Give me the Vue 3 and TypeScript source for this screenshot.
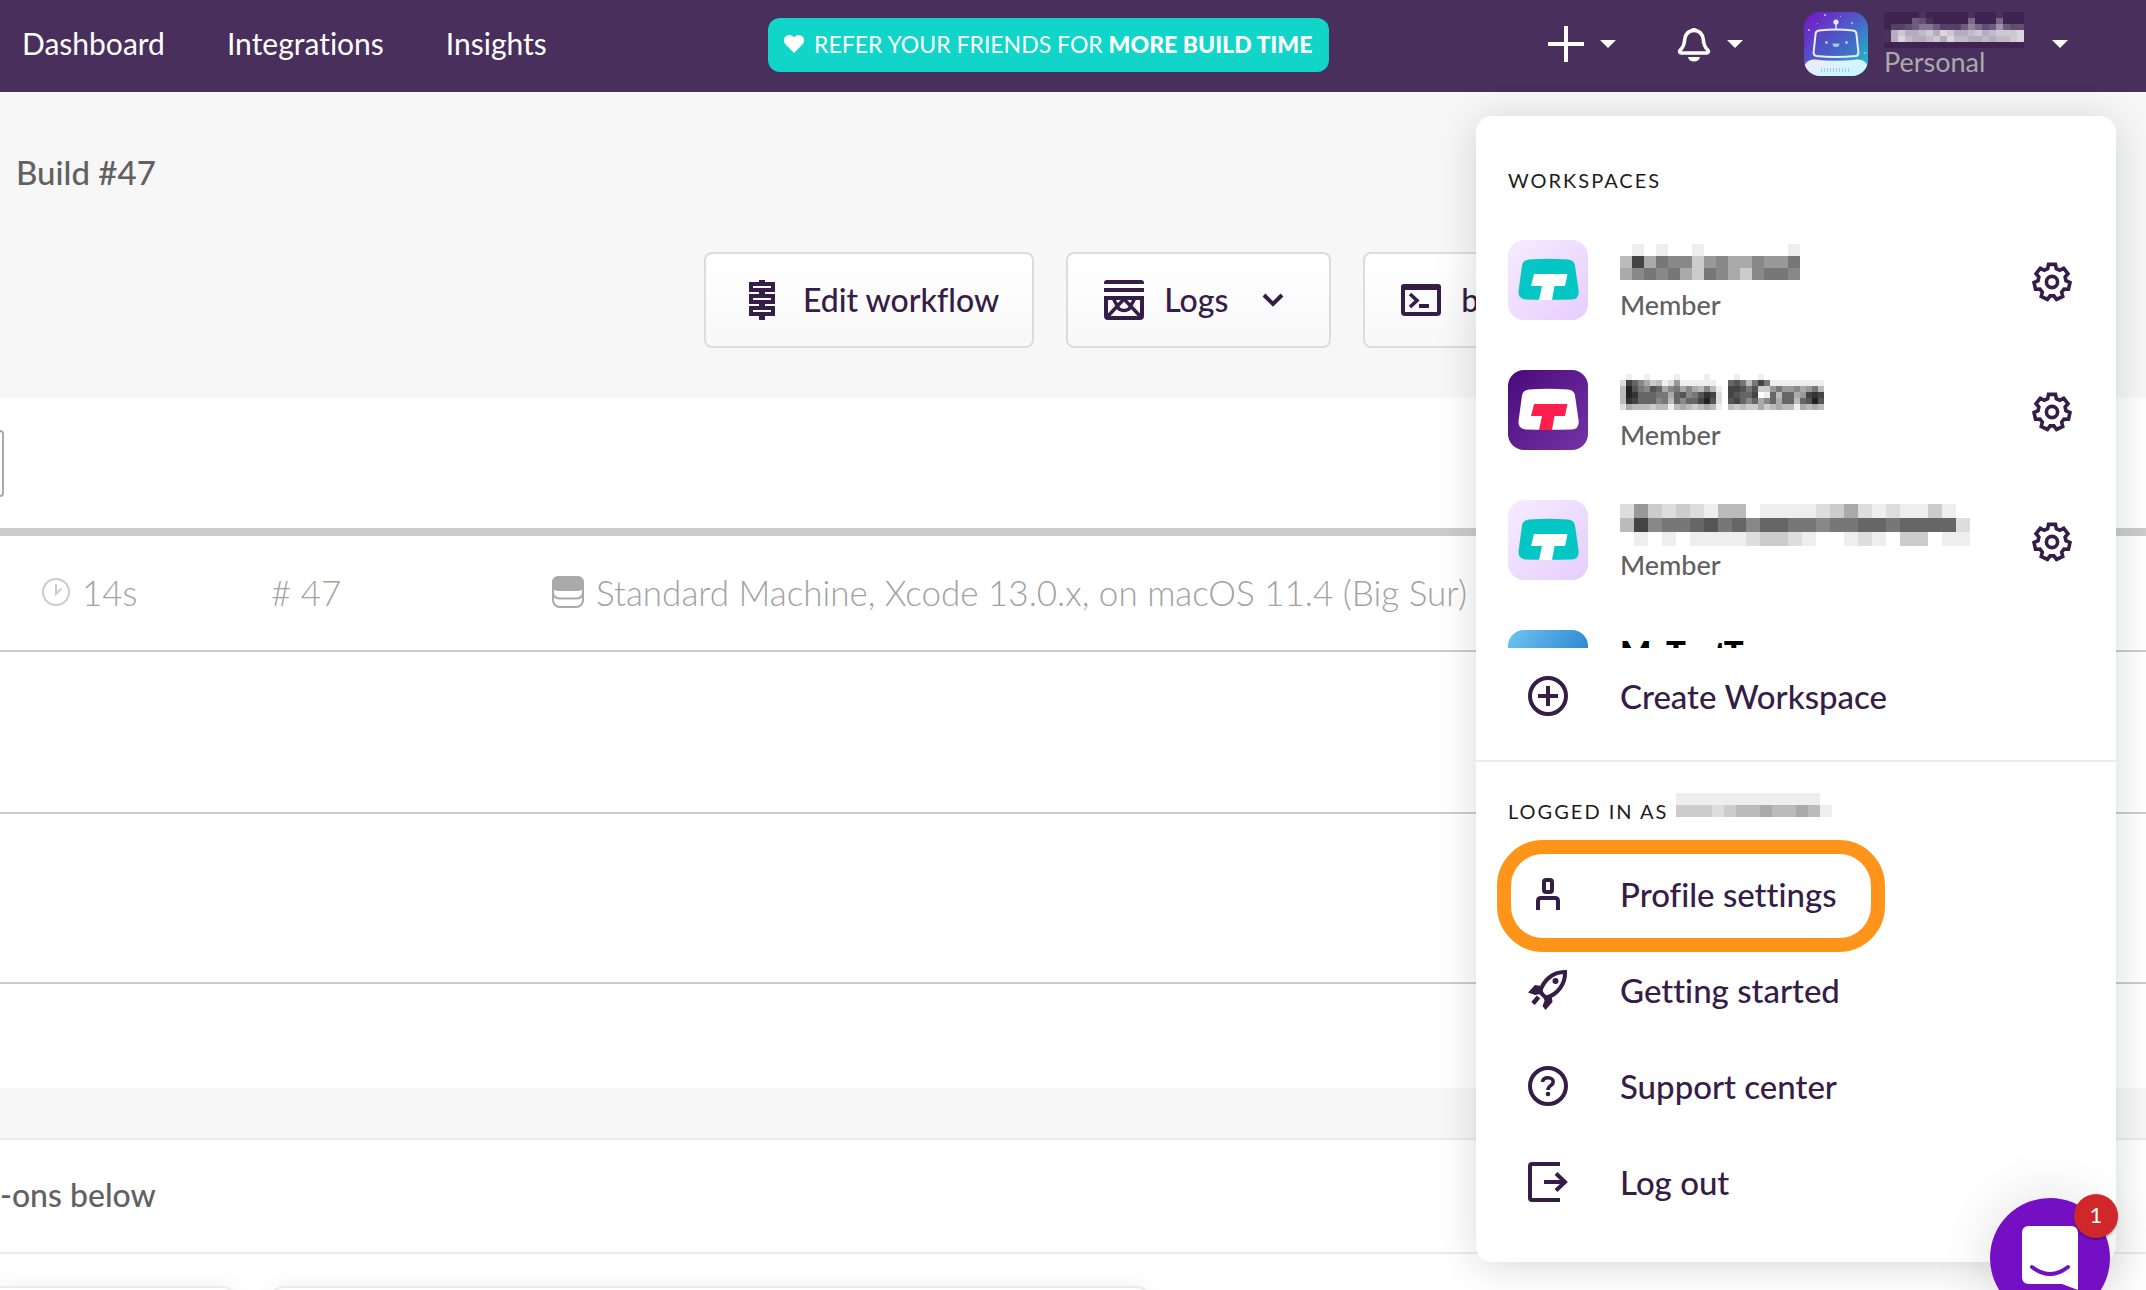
<script setup lang="ts">
interface Mosaic {
  cellW: number
  cellH: number
  rows: string[]
}

interface Workspace {
  label: string
  tone: string
  mosaic: Mosaic
}

interface Cell {
  x: number
  y: number
  shade: string
}

const navLinks: string[] = ['Dashboard', 'Integrations', 'Insights']

// Each character is one block of a redacted name: a grey level in hex, f is paper white.
const workspaces: Workspace[] = [
  {
    label: 'Workspace 1',
    tone: 'light',
    mosaic: {
      cellW: 12,
      cellH: 12,
      rows: ['fefeffefffffffe', 'b4a788c98aa8997', 'a8787ac78ac8778'],
    },
  },
  {
    label: 'Workspace 2',
    tone: 'dark',
    mosaic: {
      cellW: 6,
      cellH: 6,
      rows: [
        'feffeffffeffffeffffefffeffffffffff',
        'd468acbed9eeeeeeff657b747eeeeeeeee',
        'b257856a87a8ab8bef44575cc97998a97b',
        'b2366677a6587534df45664fe6b66a9434',
        'b3466687b6866425df54686a86a66b6525',
        'dabbbcbbebabcbabefbcbccacbabbeabab',
      ],
    },
  },
  {
    label: 'Workspace 3',
    tone: 'light',
    mosaic: {
      cellW: 14,
      cellH: 14,
      rows: ['d9cdcdebbfeeeedcadedeecef', 'b48776576866778776676666d', 'fefefeeeedccdeffedefccfee'],
    },
  },
]

const accountMosaic: Mosaic = {
  cellW: 12,
  cellH: 12,
  rows: ['eeeeeeeeeeeef', 'cccdcbbabbabe', 'fffffffffffff'],
}

// Levels here are light on the dark bar: 0 is the bar's darkest block.
const userMosaic: Mosaic = {
  cellW: 7,
  cellH: 6,
  rows: [
    '00000100000010001000',
    '00004310000050005000',
    '02234664222475348433',
    '1acaabcadcaabcabcccd',
    '1adbaabcadbbaababbcd',
    '00000000000000000000',
  ],
}

function cells(mosaic: Mosaic): Cell[] {
  return mosaic.rows.flatMap((row, r) =>
    [...row].map((shade, c) => ({ x: c * mosaic.cellW, y: r * mosaic.cellH, shade })),
  )
}

function mosaicWidth(mosaic: Mosaic): number {
  return mosaic.rows[0].length * mosaic.cellW
}

function mosaicHeight(mosaic: Mosaic): number {
  return mosaic.rows.length * mosaic.cellH
}

// Seven-toothed gear centred in a 40 x 40 box.
function gearPath(): string {
  const teeth = 7
  const points: string[] = []
  for (let k = 0; k < teeth; k += 1) {
    const middle = -90 + (k * 360) / teeth
    const corners: [number, number][] = [
      [-18, 14],
      [-11, 18],
      [11, 18],
      [18, 14],
    ]
    for (const [turn, radius] of corners) {
      const a = ((middle + turn) * Math.PI) / 180
      points.push(`${(20 + radius * Math.cos(a)).toFixed(2)} ${(20 + radius * Math.sin(a)).toFixed(2)}`)
    }
  }
  return `M${points.join('L')}Z`
}

const gear = gearPath()
</script>

<template>
  <div class="page">
    <header class="topbar">
      <nav class="nav">
        <a v-for="link in navLinks" :key="link" href="#">{{ link }}</a>
      </nav>
      <a class="refer" href="#">
        <svg width="20" height="18" viewBox="0 0 20 18"><path d="M10 18 1.600 9.400A5.400 5.400 0 0 1 1.500 1.600 5.400 5.400 0 0 1 9.100 1.600L10 2.600l.9-1A5.400 5.400 0 0 1 18.500 1.600a5.400 5.400 0 0 1-.1 7.800z" fill="#fff" /></svg>
        <span>REFER YOUR FRIENDS FOR <b>MORE BUILD TIME</b></span>
      </a>
      <div class="tools">
        <button class="tool" type="button" aria-label="Add">
          <svg width="36" height="36" viewBox="0 0 36 36"><path d="M18 0v36M0 18h36" stroke="#fff" stroke-width="4" /></svg>
          <svg class="caret" width="16" height="8" viewBox="0 0 16 8"><path d="M0 0h16L8 8z" fill="#fff" /></svg>
        </button>
        <button class="tool" type="button" aria-label="Notifications">
          <svg width="34" height="36" viewBox="0 0 34 36">
            <path d="M17 4.500c-5.500 0-9 4-9.300 9-.3 5-1.200 7.300-4.200 10.300-1.500 1.700-.8 3.200 1 3.200h25c1.800 0 2.500-1.500 1-3.200-3-3-3.900-5.300-4.200-10.300-.3-5-3.800-9-9.300-9z" fill="none" stroke="#fff" stroke-width="3.600" />
            <path d="M13 6a4 4 0 1 1 8 0zM11 31h12c-.6 3-3 4.600-6 4.600S11.600 34 11 31z" fill="#fff" />
          </svg>
          <svg class="caret" width="16" height="8" viewBox="0 0 16 8"><path d="M0 0h16L8 8z" fill="#fff" /></svg>
        </button>
        <button class="account" type="button" aria-label="Account menu">
          <svg class="avatar" width="64" height="64" viewBox="0 0 64 64">
            <defs>
              <linearGradient id="sky" x1="0" y1="0" x2="1" y2="1">
                <stop offset="0" stop-color="#7a10c8" />
                <stop offset="0.5" stop-color="#4a63c8" />
                <stop offset="1" stop-color="#12d0c8" />
              </linearGradient>
              <linearGradient id="body" x1="0" y1="0" x2="1" y2="1">
                <stop offset="0" stop-color="#f3e9ff" />
                <stop offset="1" stop-color="#bdfcff" />
              </linearGradient>
            </defs>
            <rect width="64" height="64" fill="url(#sky)" />
            <path d="M32 18v-6" stroke="#dfe0ff" stroke-width="1.500" />
            <circle cx="32" cy="10" r="2.600" fill="#eee8ff" />
            <path d="M15 18.500Q32 16.500 49 18.500q3 .3 3.400 3l2 19q.2 3.200-3 3.600Q32 46 12.600 44.100q-3-.4-3-3.600l2-19q.4-2.700 3.400-3z" fill="#4a50c0" fill-opacity="0.350" stroke="#efeaff" stroke-width="2" />
            <circle cx="22.500" cy="30.500" r="1.300" fill="#cfd6ff" />
            <circle cx="42.500" cy="30.500" r="1.300" fill="#cfd6ff" />
            <path d="M28.500 31.500h7a3.500 3.500 0 0 1-7 0z" fill="#a9c8f4" />
            <path d="M0 64V54q3-7 11-6.500Q32 50 53 47.500 61 47 64 54v10z" fill="url(#body)" />
            <path d="M17 58h30" stroke="#a8c4f0" stroke-width="4" stroke-dasharray="1 2" />
            <path d="M20 2h2v2h-2zM36 4h1v1h-1zM47 10h2v2h-2zM13 11h1v1h-1zM4 17h2v2H4zM60 40h2v2h-2z" fill="#b79cf0" />
          </svg>
          <span class="who">
            <svg :width="mosaicWidth(userMosaic)" :height="mosaicHeight(userMosaic)" shape-rendering="crispEdges">
              <rect :width="mosaicWidth(userMosaic)" :height="mosaicHeight(userMosaic)" fill="#3f2452" />
              <rect v-for="(c, i) in cells(userMosaic)" :key="i" :x="c.x" :y="c.y" :width="userMosaic.cellW" :height="userMosaic.cellH" fill="#fff" :fill-opacity="parseInt(c.shade, 16) / 16" />
            </svg>
            <span>Personal</span>
          </span>
          <svg class="caret" width="16" height="8" viewBox="0 0 16 8"><path d="M0 0h16L8 8z" fill="#fff" /></svg>
        </button>
      </div>
    </header>

    <main>
      <div class="crumb">Build #47</div>
      <div class="actions">
        <button class="action" type="button">
          <svg width="26" height="40" viewBox="0 0 26 40">
            <path d="M10 0h6v40h-6z" fill="#351d48" />
            <path d="M2 4h22v6H2zM2 16h22v6H2zM2 28h22v6H2z" fill="#fff" stroke="#351d48" stroke-width="4" />
          </svg>
          Edit workflow
        </button>
        <button class="action logs" type="button">
          <svg width="40" height="40" viewBox="0 0 40 40">
            <path d="M0 4V3q0-3 3-3h34q3 0 3 3v1zM0 8h40v4H0z" fill="#351d48" />
            <path d="M2 18h36v18q0 2-2 2H4q-2 0-2-2z" fill="none" stroke="#351d48" stroke-width="4" />
            <path d="M4 36 20 19l16 17M9 18l6 11q5 3 10 0l6-11" fill="none" stroke="#351d48" stroke-width="3.500" />
          </svg>
          Logs
          <svg class="chevron" width="22" height="16" viewBox="0 0 22 16"><path d="m2 3 9 9 9-9" fill="none" stroke="#351d48" stroke-width="4" /></svg>
        </button>
        <button class="action yml" type="button">
          <svg width="40" height="32" viewBox="0 0 40 32">
            <path d="M2 4h36v24q0 2-2 2H4q-2 0-2-2z" fill="none" stroke="#351d48" stroke-width="4" />
            <path d="M0 6V3q0-3 3-3h34q3 0 3 3v3z" fill="#351d48" />
            <path d="m9 10 7 6.500L9 23" fill="none" stroke="#351d48" stroke-width="3.600" />
            <path d="M18 20h10v4H18z" fill="#351d48" />
          </svg>
          bitrise.yml
        </button>
      </div>

      <section class="build">
        <div class="build-head"><div class="clipped-box"></div></div>
        <div class="stats">
          <div class="stat">
            <svg width="28" height="28" viewBox="0 0 28 28">
              <circle cx="14" cy="14" r="13" fill="none" stroke="#ccc" stroke-width="2" />
              <path d="M14 6v10l5.500-5.500" fill="none" stroke="#ccc" stroke-width="2" />
            </svg>
            14s
          </div>
          <div class="stat"># 47</div>
          <div class="stat">
            <svg width="32" height="32" viewBox="0 0 32 32">
              <rect x="1" y="1" width="30" height="30" rx="7" fill="none" stroke="#aaa" stroke-width="2" />
              <rect width="32" height="15" rx="6" fill="#aaa" />
              <path d="M1 17q1 5.500 7 5.500h16q6 0 7-5.500" fill="none" stroke="#aaa" stroke-width="2" />
            </svg>
            Standard Machine, Xcode 13.0.x, on macOS 11.4 (Big Sur)
          </div>
        </div>
        <div class="step one"></div>
        <div class="step two"></div>
        <div class="step three"></div>
      </section>

      <section class="addons">
        <div class="addons-title">-ons below</div>
        <div class="cards">
          <div class="card first"></div>
          <div class="card second"></div>
        </div>
      </section>
    </main>

    <aside class="menu">
      <h2>WORKSPACES</h2>
      <div class="list">
        <div v-for="ws in workspaces" :key="ws.label" class="workspace">
          <svg class="logo" :class="ws.tone" width="80" height="80" viewBox="0 0 80 80">
            <path class="screen" d="M21 19.500Q40 18 60 19.500q6 .5 7 6l3.600 25q.9 8.500-7 9-23.600.7-46 0-8-.5-7-9l3.400-25q1-5.500 7-6z" />
            <path class="tee" d="M26 34h33.500l-2.500 12H46.500L44 60H31l3-14H23z" />
          </svg>
          <div class="about">
            <svg :width="mosaicWidth(ws.mosaic)" :height="mosaicHeight(ws.mosaic)" shape-rendering="crispEdges">
              <rect v-for="(c, i) in cells(ws.mosaic)" :key="i" :x="c.x" :y="c.y" :width="ws.mosaic.cellW" :height="ws.mosaic.cellH" :fill="'#' + c.shade + c.shade + c.shade" />
            </svg>
            <span class="role">Member</span>
          </div>
          <button class="gear" type="button" :aria-label="ws.label + ' settings'">
            <svg width="40" height="40" viewBox="0 0 40 40">
              <path :d="gear" fill="none" stroke="#351d48" stroke-width="3.600" />
              <circle cx="20" cy="20" r="5.600" fill="none" stroke="#351d48" stroke-width="3.600" />
            </svg>
          </button>
        </div>
        <div class="workspace">
          <div class="logo blue"></div>
          <div class="about"><b>MyTestTeam</b></div>
        </div>
      </div>
      <a class="item" href="#">
        <svg width="40" height="40" viewBox="0 0 40 40">
          <circle cx="20" cy="20" r="18" fill="none" stroke="#351d48" stroke-width="4" />
          <path d="M20 10v20M10 20h20" stroke="#351d48" stroke-width="4" />
        </svg>
        Create Workspace
      </a>
      <div class="profile">
        <div class="logged">
          <h2>LOGGED IN AS</h2>
          <svg :width="mosaicWidth(accountMosaic)" :height="mosaicHeight(accountMosaic)" shape-rendering="crispEdges">
            <rect v-for="(c, i) in cells(accountMosaic)" :key="i" :x="c.x" :y="c.y" :width="accountMosaic.cellW" :height="accountMosaic.cellH" :fill="'#' + c.shade + c.shade + c.shade" />
          </svg>
        </div>
        <a class="item marked" href="#">
          <svg width="40" height="40" viewBox="0 0 40 40">
            <rect x="16" y="6" width="8" height="12" rx="2" fill="none" stroke="#351d48" stroke-width="4" />
            <path d="M10 36V27q0-3 3-3h14q3 0 3 3v9" fill="none" stroke="#351d48" stroke-width="4" />
          </svg>
          Profile settings
        </a>
        <a class="item" href="#">
          <svg width="40" height="40" viewBox="0 0 40 40">
            <path d="M12 22C15 11 24 2 37 2c.5 12-7 22-19 26z" fill="none" stroke="#351d48" stroke-width="4" />
            <circle cx="27.500" cy="11" r="3" fill="#351d48" />
            <path d="M0 22.500 7 15l6 1 4 11-5-3-5 1zM17.500 40l7-8-1-7-8 1 1 5-2 5z" fill="#351d48" />
            <path d="M5 33.500 10.500 27" stroke="#351d48" stroke-width="4.500" />
          </svg>
          Getting started
        </a>
        <a class="item" href="#">
          <svg width="40" height="40" viewBox="0 0 40 40">
            <circle cx="20" cy="20" r="18" fill="none" stroke="#351d48" stroke-width="4" />
            <path d="M14.500 16c.3-3 2.700-4.300 5.500-4.300 3 0 5.200 1.600 5.200 4.200 0 3.600-5.200 3.400-5.200 8.100" fill="none" stroke="#351d48" stroke-width="3.600" />
            <circle cx="20" cy="28" r="2.300" fill="#351d48" />
          </svg>
          Support center
        </a>
        <a class="item" href="#">
          <svg width="40" height="40" viewBox="0 0 40 40">
            <path d="M32 2H4Q2 2 2 4v32q0 2 2 2h28M16 20h21M28 11.500l9 8.500-9 8.500" fill="none" stroke="#351d48" stroke-width="4" />
          </svg>
          Log out
        </a>
      </div>
    </aside>

    <button class="chat" type="button" aria-label="Open chat">
      <svg width="56" height="64" viewBox="0 0 56 64">
        <path d="M7 0h42q7 0 7 7v57q-8-3-16-6H7q-7 0-7-7V7q0-7 7-7z" fill="#fff" />
        <path d="M10 41q18 14 36 0" fill="none" stroke="#750fc3" stroke-width="4" stroke-linecap="round" />
      </svg>
      <span class="count">1</span>
    </button>
  </div>
</template>

<style>
body {
  margin: 0;
}
</style>

<style scoped>
.page {
  position: relative;
  height: 100vh;
  overflow: hidden;
  background: #f7f7f7;
  color: #351d48;
  font-family: Lato, "Liberation Sans", sans-serif;
  font-size: 33px;
  font-variant-ligatures: none;
  line-height: 40px;
}
.page *,
.page *::after {
  box-sizing: border-box;
}
svg {
  display: block;
  flex: none;
}
a {
  color: inherit;
  text-decoration: none;
}
button {
  padding: 0;
  border: 0;
  background: none;
  color: inherit;
  font: inherit;
}
.topbar {
  display: grid;
  grid-template-columns: 768px auto 1fr;
  align-items: center;
  height: 92px;
  background: #492f5c;
  color: #fff;
}
.nav {
  display: flex;
  gap: 62px;
  padding: 0 0 6px 22px;
  font-size: 30px;
}
.refer {
  display: flex;
  align-items: center;
  gap: 10px;
  height: 54px;
  margin-bottom: 2px;
  padding: 0 17px 2px 16px;
  border-radius: 12px;
  background: #10d5c8;
  font-size: 23px;
}
.refer b {
  font-weight: 900;
}
.tools {
  display: flex;
  justify-content: flex-end;
  align-items: center;
  padding: 0 78px 4px 0;
}
.tool {
  display: flex;
  align-items: center;
  gap: 16px;
  margin-right: 61px;
}
.account {
  display: flex;
  align-items: center;
  text-align: left;
}
.avatar {
  border-radius: 16px;
}
.who {
  display: flex;
  flex-direction: column;
  width: 184px;
  padding-left: 16px;
  color: #aaa;
  font-size: 27px;
  line-height: 28px;
}
.crumb {
  padding: 60px 16px;
  font-weight: 500;
  color: #616161;
}
.actions {
  display: flex;
  gap: 32px;
  padding-left: 704px;
}
.action {
  display: flex;
  align-items: center;
  height: 96px;
  padding: 0 33px 0 43px;
  border: 2px solid #dcdcdc;
  border-radius: 8px;
  background: linear-gradient(#fff, #f8f8f8);
  font-size: 32px;
  font-weight: 500;
  gap: 28px;
  white-space: nowrap;
}
.logs {
  padding: 0 45px 0 36px;
  gap: 20px;
}
.chevron {
  margin-left: 14px;
}
.yml {
  padding-left: 36px;
  gap: 20px;
}
.build {
  margin-top: 50px;
  background: #fff;
}
.build-head {
  height: 138px;
  padding-top: 32px;
  border-bottom: 8px solid #ccc;
}
.clipped-box {
  width: 4px;
  height: 67px;
  border: 2px solid #aaa;
  border-left: 0;
  border-radius: 0 6px 6px 0;
}
.stats {
  display: grid;
  grid-template-columns: 229px 281px 1fr;
  align-items: center;
  height: 116px;
  padding: 0 0 2px 42px;
  border-bottom: 2px solid #ccc;
  color: #a2a2a2;
  font-size: 35px;
  font-weight: 300;
  white-space: nowrap;
}
.stat {
  display: flex;
  align-items: center;
  gap: 12px;
}
.step {
  border-bottom: 2px solid #ccc;
}
.one {
  height: 162px;
}
.two {
  height: 170px;
}
.three {
  height: 104px;
  border: 0;
}
.addons {
  margin-top: 50px;
  border-top: 2px solid #ebebeb;
  background: #fff;
}
.addons-title {
  padding: 35px 0 37px;
  border-bottom: 2px solid #ebebeb;
  font-size: 32px;
  font-weight: 500;
  color: #616161;
}
.cards {
  display: flex;
  gap: 30px;
  padding-top: 32px;
}
.card {
  height: 200px;
  border: 2px solid #ebebeb;
  border-radius: 16px;
  box-shadow: 0 0 24px rgba(0, 0, 0, 0.06);
}
.first {
  width: 238px;
  border-left: 0;
  border-top-left-radius: 0;
}
.second {
  width: 884px;
}
.menu {
  position: absolute;
  top: 116px;
  right: 30px;
  width: 640px;
  padding: 44px 0 32px;
  border-radius: 16px;
  background: #fff;
  box-shadow: 0 4px 40px rgba(0, 24, 16, 0.16);
}
h2 {
  margin: 0;
  color: #1c1c1c;
  font-size: 20px;
  font-weight: 400;
  letter-spacing: 2px;
}
.menu > h2 {
  padding-left: 32px;
}
.list {
  height: 448px;
  padding-top: 40px;
  overflow: hidden;
}
.workspace {
  display: flex;
  height: 130px;
  padding: 0 44px 0 32px;
}
.logo {
  width: 80px;
  height: 80px;
  border-radius: 16px;
}
.light {
  background: linear-gradient(135deg, #f6ecff, #e6cdfc);
}
.light .screen {
  fill: #04c7c5;
}
.light .tee {
  fill: #fff;
}
.dark {
  background: linear-gradient(135deg, #4a0a7c, #7534a4);
}
.dark .screen {
  fill: #fff;
}
.dark .tee {
  fill: #ff1f4f;
}
.blue {
  background: linear-gradient(120deg, #6cc4f2, #1a70c4);
}
.about {
  display: flex;
  flex: 1;
  flex-direction: column;
  height: 80px;
  padding-left: 32px;
}
.about svg {
  margin-top: 4px;
}
.about b {
  color: #000;
  font-size: 33px;
  font-weight: 900;
  line-height: 44px;
}
.role {
  margin-top: auto;
  color: #616161;
  font-size: 27px;
  font-weight: 500;
  line-height: 30px;
}
.gear {
  align-self: flex-start;
  margin-top: 22px;
}
.item {
  display: flex;
  align-items: center;
  gap: 52px;
  height: 96px;
  padding-left: 52px;
  font-weight: 500;
}
.profile {
  margin-top: 16px;
  padding-top: 30px;
  border-top: 2px solid #ebebeb;
}
.logged {
  display: flex;
  align-items: center;
  gap: 8px;
  height: 38px;
  margin-bottom: 16px;
  padding-left: 32px;
}
.marked {
  position: relative;
}
.marked::after {
  content: "";
  position: absolute;
  top: -6px;
  left: 21px;
  width: 388px;
  height: 112px;
  border: 14px solid #ff941a;
  border-radius: 46px;
}
.chat {
  position: absolute;
  right: 36px;
  bottom: -28px;
  display: flex;
  justify-content: center;
  width: 120px;
  height: 120px;
  padding-top: 28px;
  border-radius: 60px;
  background: #750fc3;
  box-shadow: 0 2px 60px rgba(0, 0, 0, 0.14);
}
.count {
  position: absolute;
  top: -4px;
  right: -8px;
  width: 44px;
  height: 44px;
  border-radius: 22px;
  background: #d0282a;
  box-shadow: 0 2px 2px rgba(0, 0, 0, 0.3);
  color: #fff;
  font-size: 22px;
  line-height: 42px;
  text-align: center;
}
</style>
